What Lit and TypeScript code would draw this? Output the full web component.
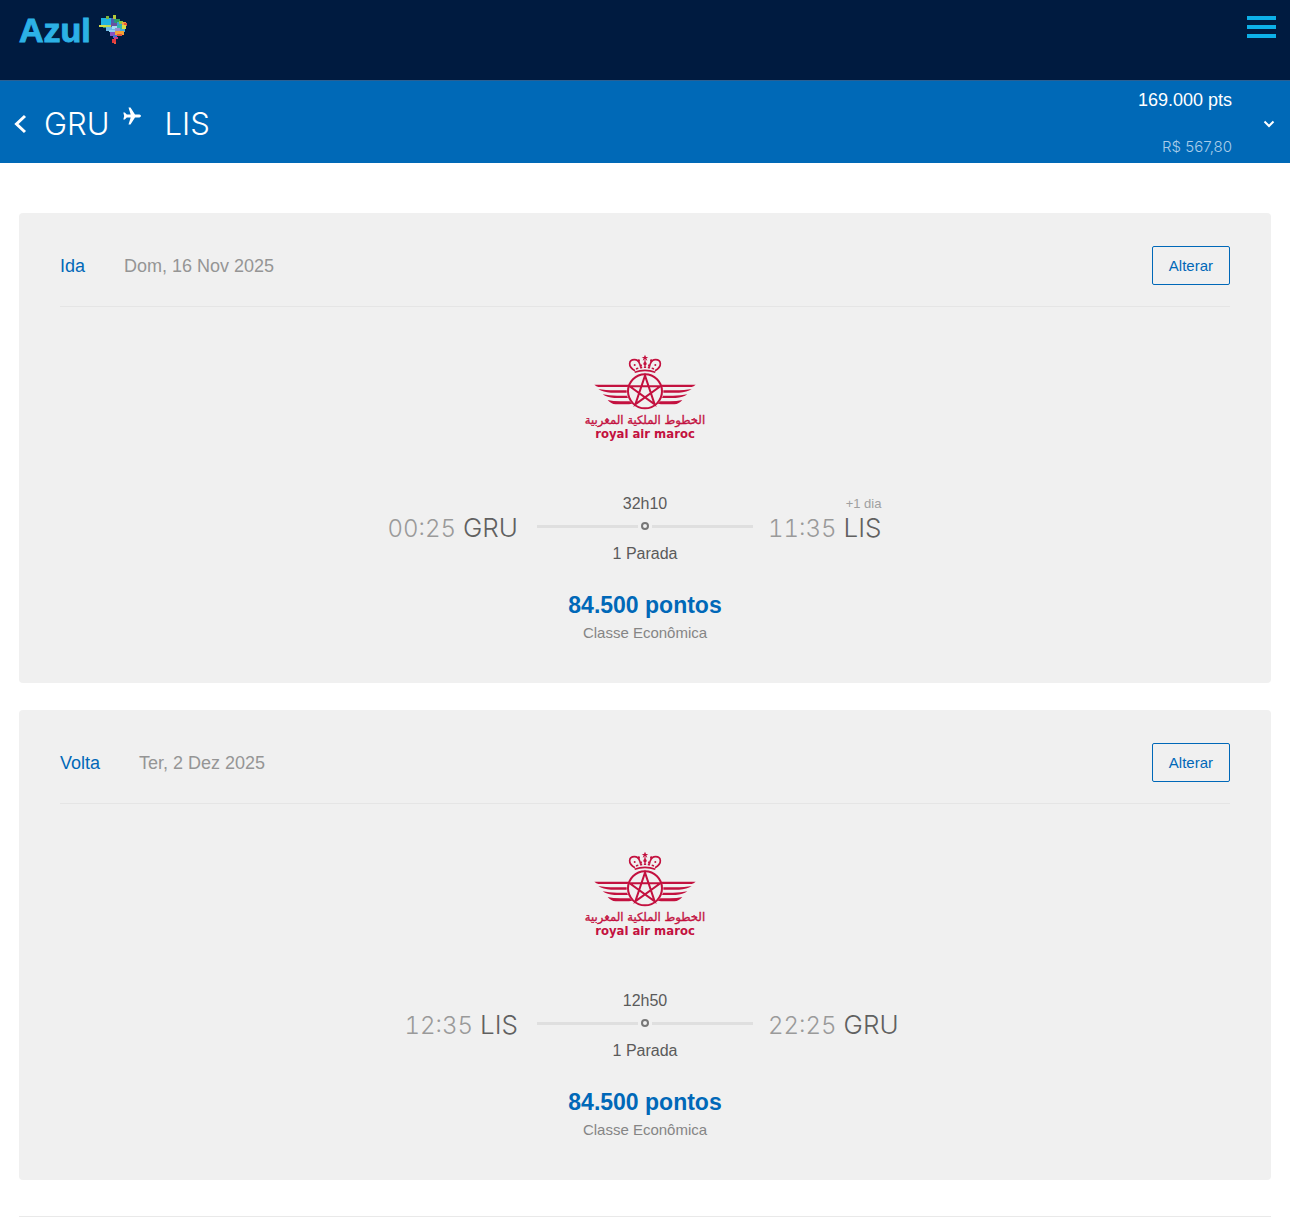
import { LitElement, html, svg, css, nothing } from "lit";
import { customElement, property } from "lit/decorators.js";

interface Stop {
  time: string;
  airport: string;
  note?: string;
}

interface Flight {
  direction: string;
  date: string;
  from: Stop;
  to: Stop;
  duration: string;
  stops: string;
  points: string;
  cabin: string;
}

const FLIGHTS: Flight[] = [
  {
    direction: "Ida",
    date: "Dom, 16 Nov 2025",
    from: { time: "00:25", airport: "GRU" },
    to: { time: "11:35", airport: "LIS", note: "+1 dia" },
    duration: "32h10",
    stops: "1 Parada",
    points: "84.500 pontos",
    cabin: "Classe Econômica",
  },
  {
    direction: "Volta",
    date: "Ter, 2 Dez 2025",
    from: { time: "12:35", airport: "LIS" },
    to: { time: "22:25", airport: "GRU" },
    duration: "12h50",
    stops: "1 Parada",
    points: "84.500 pontos",
    cabin: "Classe Econômica",
  },
];

// Mosaic tiles of the map of Brazil: x, y, width, height, colour.
const TILES: [number, number, number, number, string][] = [
  [2, 3, 10, 8, "#1fb4e0"],
  [7, 1, 3, 3, "#7fb53c"],
  [12, 3, 3, 6, "#4a5fb0"],
  [15, 4, 3, 4, "#2a8f8a"],
  [14, 0, 3, 4, "#b5c93a"],
  [17, 4, 4, 4, "#2f9d5c"],
  [12, 8, 6, 4, "#6a4fa0"],
  [18, 7, 5, 4, "#3b9fd8"],
  [20, 6, 4, 3, "#8cc63f"],
  [23, 7, 4, 4, "#f2a33a"],
  [25, 8, 3, 3, "#e8553c"],
  [0, 10, 7, 2, "#d5dc4a"],
  [7, 10, 5, 2, "#b9da55"],
  [4, 12, 4, 1, "#2f9d5c"],
  [7, 12, 9, 4, "#6cb9e6"],
  [13, 11, 5, 3, "#a6dcf2"],
  [18, 10, 5, 4, "#35b6a8"],
  [23, 10, 4, 4, "#d5dc4a"],
  [10, 15, 6, 2, "#8fd0ee"],
  [16, 13, 5, 4, "#9a8fce"],
  [21, 14, 5, 3, "#3fa9dd"],
  [11, 17, 5, 4, "#8a4fc0"],
  [16, 16, 4, 4, "#f2a33a"],
  [20, 16, 5, 4, "#f7a233"],
  [18, 19, 5, 2, "#e8553c"],
  [14, 20, 4, 3, "#4a6fd0"],
  [15, 22, 4, 2, "#c93a8c"],
  [13, 24, 4, 4, "#e23a3f"],
  [15, 27, 2, 2, "#e8553c"],
];

const brazilMap = html`
  <svg class="map" viewBox="0 0 28 29" aria-hidden="true">
    ${TILES.map(
      ([x, y, w, h, c]) => svg`<rect x=${x} y=${y} width=${w} height=${h} fill=${c}></rect>`
    )}
  </svg>
`;

const wing = () => svg`
  <path d="M72 133H175L172 140H84Q78 139 72 133Z"></path>
  <path d="M84 146Q104 150 134 150H169V157H122Q98 156 84 146Z"></path>
  <path d="M97 162Q115 166 140 166H170L173 173H132Q110 172 97 162Z"></path>
  <path d="M112 179Q128 183 150 183H178L186 190L176 192H136Q122 191 112 179Z"></path>
`;

const airlineLogo = html`
  <svg class="airline" viewBox="38 44 372 252" role="img" aria-label="Royal Air Maroc">
    <g fill="#c3113f">
      ${wing()}
      <g transform="matrix(-1 0 0 1 448 0)">${wing()}</g>
      <path d="M224 43L227 50H234L228 54L231 61L224 57L217 61L220 54L214 50H221Z"></path>
      <circle cx="205" cy="61" r="4"></circle>
      <circle cx="243" cy="61" r="4"></circle>
      <circle cx="211" cy="76" r="4"></circle>
      <circle cx="237" cy="76" r="4"></circle>
      <circle cx="224" cy="70" r="5"></circle>
      <circle cx="193" cy="74" r="3"></circle>
      <circle cx="255" cy="74" r="3"></circle>
    </g>
    <g fill="none" stroke="#c3113f">
      <circle cx="224" cy="153" r="51" stroke-width="6"></circle>
      <path d="M224 106L253 192L178 138H270L195 192Z" stroke-width="6"></path>
      <path d="M193 96Q224 84 255 96" stroke-width="5"></path>
      <path d="M194 91C170 78 176 58 192 58C203 58 207 66 209 73M254 91C278 78 272 58 256 58C245 58 241 66 239 73" stroke-width="5"></path>
      <path d="M197 86Q224 76 251 86" stroke-width="4" stroke-dasharray="7 5"></path>
      <path d="M224 60V82" stroke-width="4"></path>
    </g>
    <text class="arabic" x="224" y="250" text-anchor="middle">الخطوط الملكية المغربية</text>
    <text class="latin" x="224" y="292" text-anchor="middle">royal air maroc</text>
  </svg>
`;

@customElement("flight-card")
export class FlightCard extends LitElement {
  @property({ attribute: false }) flight!: Flight;

  static styles = css`
    :host {
      display: block;
      box-sizing: border-box;
      padding: 33px 41px 40px;
      border-radius: 4px;
      background: #f0f0f0;
      color: #959595;
    }
    .head {
      display: flex;
      align-items: center;
      padding-bottom: 21px;
      border-bottom: 1px solid #e5e5e5;
      font-size: 18px;
      line-height: 24px;
    }
    .direction {
      margin: 0 39px 0 0;
      font-size: 18px;
      font-weight: 400;
      color: #0068b8;
    }
    .date {
      flex: 1;
    }
    .change {
      padding: 0 16px;
      height: 39px;
      border: 1px solid #0068b8;
      border-radius: 2px;
      background: transparent;
      color: #0068b8;
      font: inherit;
      font-size: 15px;
      cursor: pointer;
    }
    .airline {
      display: block;
      width: 124px;
      height: 84px;
      margin: 48px auto 55px;
      overflow: visible;
    }
    .arabic {
      fill: #c3113f;
      stroke: #c3113f;
      stroke-width: 1px;
      font: 35px "DejaVu Sans", sans-serif;
    }
    .latin {
      fill: #c3113f;
      font: bold 35px "DejaVu Sans", sans-serif;
    }
    .route {
      display: grid;
      grid-template-columns: 1fr 216px 1fr;
      column-gap: 15px;
      align-items: start;
    }
    .stop {
      display: flex;
      flex-direction: column;
      justify-self: start;
      text-align: right;
    }
    .stop:first-child {
      justify-self: end;
      padding-right: 4px;
    }
    .note {
      height: 20px;
      font-size: 13px;
      line-height: 20px;
      color: #a0a0a0;
    }
    .when {
      display: flex;
      align-items: baseline;
      gap: 7px;
      font: 300 24px/28px Inter, "Liberation Sans", sans-serif;
      font-variant-numeric: tabular-nums;
      color: #9a9a9a;
    }
    .airport {
      font-size: 26px;
      color: #606060;
    }
    .middle {
      text-align: center;
      font-size: 16px;
      line-height: 20px;
      color: #5a5a5a;
    }
    .track {
      display: flex;
      align-items: center;
      gap: 3px;
      margin: 8px 0 14px;
    }
    .line {
      flex: 1;
      height: 3px;
      background: #dfdfdf;
    }
    .dot {
      box-sizing: border-box;
      width: 8px;
      height: 8px;
      border: 2px solid #777;
      border-radius: 50%;
    }
    .points {
      margin: 27px 0 4px;
      text-align: center;
      font-size: 23px;
      font-weight: 700;
      line-height: 28px;
      color: #0068b8;
    }
    .cabin {
      margin: 0;
      text-align: center;
      font-size: 15px;
      line-height: 20px;
      color: #858585;
    }
  `;

  private stop(stop: Stop) {
    return html`
      <div class="stop">
        <div class="note">${stop.note ?? nothing}</div>
        <div class="when">
          <span>${stop.time}</span>
          <span class="airport">${stop.airport}</span>
        </div>
      </div>
    `;
  }

  render() {
    const f = this.flight;
    return html`
      <div class="head">
        <h2 class="direction">${f.direction}</h2>
        <span class="date">${f.date}</span>
        <button class="change" type="button">Alterar</button>
      </div>
      ${airlineLogo}
      <div class="route">
        ${this.stop(f.from)}
        <div class="middle">
          <div>${f.duration}</div>
          <div class="track">
            <span class="line"></span><span class="dot"></span><span class="line"></span>
          </div>
          <div>${f.stops}</div>
        </div>
        ${this.stop(f.to)}
      </div>
      <p class="points">${f.points}</p>
      <p class="cabin">${f.cabin}</p>
    `;
  }
}

@customElement("app-root")
export class AppRoot extends LitElement {
  static styles = css`
    :host {
      display: block;
      background: #fff;
      font-family: "Liberation Sans", Arial, sans-serif;
    }
    button {
      display: block;
      padding: 0;
      border: 0;
      background: none;
      cursor: pointer;
    }
    svg {
      display: block;
    }
    .top {
      box-sizing: border-box;
      display: flex;
      justify-content: space-between;
      align-items: flex-start;
      height: 80px;
      padding: 12px 14px 0 19px;
      background: #001b40;
    }
    .brand {
      display: flex;
      align-items: center;
      gap: 8px;
      color: #2cb1e6;
      font-size: 34px;
      font-weight: 700;
      line-height: 36px;
      text-decoration: none;
      -webkit-text-stroke: 1px #2cb1e6;
    }
    .map {
      width: 28px;
      height: 29px;
      margin-bottom: 2px;
    }
    .menu {
      padding-top: 4px;
    }
    .trip {
      box-sizing: border-box;
      display: flex;
      align-items: center;
      min-height: 83px;
      padding: 4px 15px 0 14px;
      border-top: 1px solid #2a5f92;
      background: #0069b7;
      color: #fff;
    }
    .cities {
      flex: 1;
      display: flex;
      align-items: center;
      margin: 0 0 0 17px;
      font: 300 31px/36px Inter, "Liberation Sans", sans-serif;
    }
    .plane {
      margin: 0 24px 16px 13px;
    }
    .total {
      margin-right: 31px;
      text-align: right;
    }
    .pts {
      margin: 0 0 24px;
      font-size: 18px;
      line-height: 22px;
    }
    .fee {
      margin: 0;
      font: 300 15px/24px Inter, "Liberation Sans", sans-serif;
      color: #a9cdea;
    }
    .flights {
      display: grid;
      gap: 27px;
      padding: 50px 19px 36px;
    }
    .rule {
      margin: 0 19px;
      border: 0;
      border-top: 1px solid #e9e9e9;
    }
  `;

  render() {
    return html`
      <header class="top">
        <a class="brand" href="#"><span>Azul</span>${brazilMap}</a>
        <button class="menu" type="button" aria-label="Menu">
          <svg width="29" height="23" viewBox="0 0 29 23" fill="#0db0e8">
            <rect y="0" width="29" height="4"></rect>
            <rect y="9" width="29" height="4"></rect>
            <rect y="18" width="29" height="4"></rect>
          </svg>
        </button>
      </header>
      <section class="trip">
        <button type="button" aria-label="Voltar">
          <svg width="13" height="20" viewBox="0 0 13 20" fill="none" stroke="#fff" stroke-width="3">
            <path d="M11 2L2.500 10L11 18"></path>
          </svg>
        </button>
        <h1 class="cities">
          <span>GRU</span>
          <svg class="plane" width="18" height="18" viewBox="0 0 18 18" fill="#fff" aria-hidden="true">
            <path d="M5.500 0.500H7.500L12 7.600H16.400Q18 8 18 9Q18 10 16.400 10.400H12L7.500 17.500H5.500L7.700 10.400H3.800L1.800 12.600H0.300L1.200 9L0.300 5.400H1.800L3.800 7.600H7.700Z"></path>
          </svg>
          <span>LIS</span>
        </h1>
        <div class="total">
          <p class="pts">169.000 pts</p>
          <p class="fee">R$ 567,80</p>
        </div>
        <button type="button" aria-label="Ver detalhes">
          <svg width="12" height="8" viewBox="0 0 12 8" fill="none" stroke="#fff" stroke-width="2">
            <path d="M1.500 1.500L6 6L10.500 1.500"></path>
          </svg>
        </button>
      </section>
      <main class="flights">
        ${FLIGHTS.map((f) => html`<flight-card .flight=${f}></flight-card>`)}
      </main>
      <hr class="rule" />
    `;
  }
}
